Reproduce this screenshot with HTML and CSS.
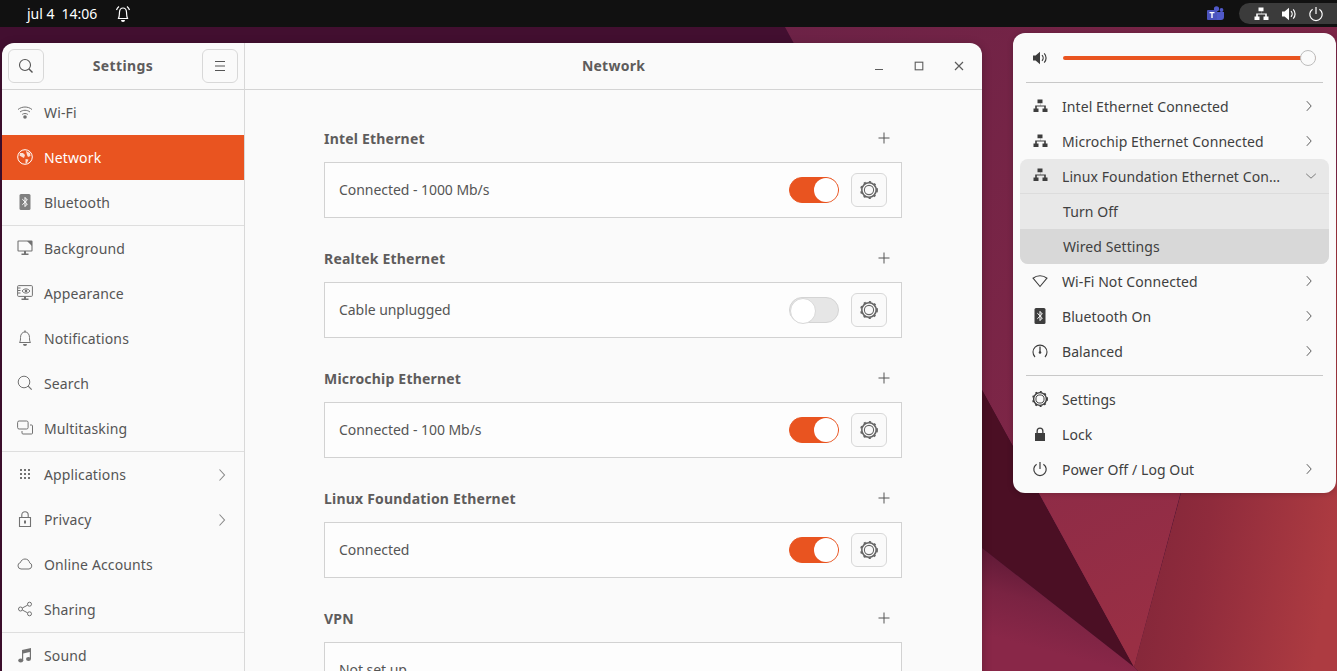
FILE: index.html
```html
<!DOCTYPE html>
<html lang="es">
<head>
<meta charset="utf-8">
<title>Settings - Network</title>
<link rel="stylesheet" href="styles.css">
</head>
<body>
<svg class="defs" width="0" height="0" aria-hidden="true">
  <symbol id="i-net" viewBox="0 0 16 16"><path fill="currentColor" d="M5.500 1.500h5v3.700H8.600v2.300h5.200v3h1.700V14h-5v-3.500h1.700V8.600H4.800v1.900h1.700V14h-5v-3.500h1.700v-3h5.200V5.200H5.500z"/></symbol>
  <symbol id="i-gear" viewBox="0 0 18 18"><circle cx="9" cy="9" r="7.200" fill="none" stroke="currentColor" stroke-width="1.600" /><circle cx="9" cy="9" r="8.100" fill="none" stroke="currentColor" stroke-width="1.700" stroke-dasharray="2.200 3.200"/><circle cx="9" cy="9" r="4.600" fill="none" stroke="currentColor" stroke-width="1.100"/></symbol>
  <symbol id="i-chev" viewBox="0 0 16 16"><path fill="none" stroke="currentColor" stroke-width="1.100" d="M5.500 2.500 10.500 8l-5 5.500"/></symbol>
  <symbol id="i-plus" viewBox="0 0 12 12"><path fill="none" stroke="currentColor" stroke-width="1" d="M6 .5v11M.5 6h11"/></symbol>
  <symbol id="i-vol" viewBox="0 0 16 16"><path fill="currentColor" d="M1 5.500h2.600L8 1.800v12.400L3.600 10.500H1z"/><path fill="none" stroke="currentColor" stroke-width="1.200" d="M10 5.200a4 4 0 0 1 0 5.600M12.200 3.400a6.600 6.600 0 0 1 0 9.200"/></symbol>
  <symbol id="i-power" viewBox="0 0 16 16"><path fill="none" stroke="currentColor" stroke-width="1.200" d="M8 1v7M4.600 3.200a6.200 6.200 0 1 0 6.800 0"/></symbol>
  <symbol id="i-bt" viewBox="0 0 12 16"><rect x=".5" y="0" width="11" height="16" rx="1.500" fill="currentColor"/><path fill="none" stroke="#fff" stroke-width="1" d="M3.300 5.200 8.300 10 6 12.600V3.400L8.300 6l-5 4.800"/></symbol>
</svg>

<main class="desktop">
  <svg class="wallpaper" viewBox="0 0 1337 671" preserveAspectRatio="none" aria-hidden="true">
    <defs>
      <linearGradient id="g-right" x1="0" y1="0.3" x2="1" y2="0.7"><stop offset="0" stop-color="#7c2438"/><stop offset="0.45" stop-color="#8f2b3c"/><stop offset="1" stop-color="#ad3b41"/></linearGradient>
      <linearGradient id="g-kite" x1="0" y1="0" x2="0.4" y2="1"><stop offset="0" stop-color="#8a2a48"/><stop offset="1" stop-color="#992f44"/></linearGradient>
      <linearGradient id="g-low" x1="0.7" y1="0.1" x2="0.45" y2="0.85"><stop offset="0" stop-color="#561632"/><stop offset="0.55" stop-color="#7a2342"/><stop offset="1" stop-color="#892748"/></linearGradient>
      <linearGradient id="g-top" x1="0" y1="0" x2="1" y2="1"><stop offset="0" stop-color="#6c2246"/><stop offset="1" stop-color="#8c2947"/></linearGradient>
    </defs>
    <rect width="1337" height="671" fill="#420f30"/>
    <polygon points="785,27 1337,27 1337,300 1180,494 1134,667 982,390" fill="url(#g-top)"/>
    <polygon points="982,390 1134,667 982,548" fill="#4b0f24"/>
    <polygon points="982,548 1134,667 1138,671 982,671" fill="url(#g-low)"/>
    <polygon points="1013,445 1134,667 1200,420 1013,420" fill="url(#g-kite)"/>
    <polygon points="1260,200 1337,200 1337,671 1138,671 1134,667" fill="url(#g-right)"/>
  </svg>

  <header class="topbar">
    <div class="clock"><span>jul 4</span><span>14:06</span>
      <svg class="bell-top" width="16" height="18" viewBox="0 0 16 18"><path fill="none" stroke="#fff" stroke-width="1.200" d="M3.500 13.500c1-2 .8-4 1-6.500C4.700 4.500 6 3 8 3s3.300 1.500 3.500 4c.2 2.500 0 4.500 1 6.500zM1.500 5C2 3.500 3 2.300 4 1.500M14.500 5C14 3.500 13 2.300 12 1.500"/><path fill="#fff" d="M6 15h4a2 2 0 0 1-4 0z"/></svg>
    </div>
    <div class="tray">
      <svg class="teams" width="18" height="16" viewBox="0 0 18 16"><circle cx="9.500" cy="2.800" r="2.600" fill="#5059c9"/><circle cx="14.500" cy="4" r="1.900" fill="#5059c9"/><path fill="#5059c9" d="M5 6h12v5a3 3 0 0 1-3 3H9a4 4 0 0 1-4-4z"/><rect x="0" y="4" width="10" height="10" rx="1" fill="#4b53bc"/><path fill="#fff" d="M2.500 6h5v1.200H5.700V12H4.300V7.200H2.500z"/></svg>
      <div class="pill">
        <svg class="pill-net" width="18" height="16"><use href="#i-net"/></svg>
        <svg width="16" height="16"><use href="#i-vol"/></svg>
        <svg width="16" height="16"><use href="#i-power"/></svg>
      </div>
    </div>
  </header>

  <section class="window">
    <aside class="sidebar">
      <div class="side-head">
        <button class="head-btn"><svg width="16" height="16" viewBox="0 0 16 16"><circle cx="7" cy="7" r="5.500" fill="none" stroke="currentColor" stroke-width="1.100"/><path stroke="currentColor" stroke-width="1.400" d="m11 11 3.500 3.500"/></svg></button>
        <h1 class="side-title">Settings</h1>
        <button class="head-btn"><svg width="12" height="12" viewBox="0 0 12 12"><path stroke="currentColor" stroke-width="1" d="M1 1.500h10M1 6h10M1 10.500h10"/></svg></button>
      </div>
      <nav class="side-list">
        <div class="side-row"><svg class="side-ic" width="16" height="16" viewBox="0 0 16 16"><path fill="none" stroke="currentColor" stroke-width="1" d="M1 5.500c4-3.300 10-3.300 14 0M3 8c3-2.300 7-2.300 10 0M5.200 10.400c1.700-1.200 3.900-1.200 5.600 0"/><circle cx="8" cy="13" r="1.800" fill="currentColor"/></svg>Wi-Fi</div>
        <div class="side-row active"><svg class="side-ic" width="16" height="16" viewBox="0 0 16 16"><circle cx="8" cy="8" r="7.300" fill="none" stroke="currentColor" stroke-width="1"/><path fill="currentColor" opacity=".8" d="M3 4h3l2 2-1 3-2-1-2.500-1.500zM9 2l4 2 .5 3-2.500 1-1-2zM8.500 10l3 .5-1.500 3.500-1.500.5z"/></svg>Network</div>
        <div class="side-row"><svg class="side-ic side-ic-narrow" width="12" height="16" viewBox="0 0 12 16"><use href="#i-bt"/></svg>Bluetooth</div>
        <hr class="side-sep">
        <div class="side-row"><svg class="side-ic" width="16" height="16" viewBox="0 0 16 16"><path fill="none" stroke="currentColor" stroke-width="1.100" d="M1.500 1h13a.5.5 0 0 1 .5.5v9a.5.5 0 0 1-.5.5h-13a.5.5 0 0 1-.5-.5v-9a.5.5 0 0 1 .5-.5z"/><path fill="currentColor" d="M10 1h5v5zM7 11h2v2.500h2.500V15h-7v-1.500H7z"/></svg>Background</div>
        <div class="side-row"><svg class="side-ic" width="16" height="16" viewBox="0 0 16 16"><rect x=".6" y=".6" width="14.800" height="10.800" rx="1" fill="none" stroke="currentColor" stroke-width="1"/><path fill="none" stroke="currentColor" stroke-width="1" d="M5 6c2-2.800 6-2.800 8 0-2 2.800-6 2.800-8 0zM1 3h2.500M1 5.500h2.500M1 8h2.500"/><circle cx="9" cy="6" r="1.300" fill="currentColor"/><path fill="currentColor" d="M7 11.500h2v2h2.500V15h-7v-1.500H7z"/></svg>Appearance</div>
        <div class="side-row"><svg class="side-ic" width="16" height="16" viewBox="0 0 16 16"><path fill="none" stroke="currentColor" stroke-width="1" d="M2.500 12.500c1-1.500 1-3 1-5C3.500 4 5.500 2 8 2s4.500 2 4.500 5.500c0 2 0 3.500 1 5z"/><path fill="currentColor" d="M6 14h4a2 2 0 0 1-4 0zM7.300.6h1.400V2H7.300z"/></svg>Notifications</div>
        <div class="side-row"><svg class="side-ic" width="16" height="16" viewBox="0 0 16 16"><circle cx="7" cy="7" r="5.800" fill="none" stroke="currentColor" stroke-width="1"/><path stroke="currentColor" stroke-width="1.200" d="m11.200 11.200 3.500 3.500"/></svg>Search</div>
        <div class="side-row"><svg class="side-ic" width="16" height="16" viewBox="0 0 16 16"><rect x=".6" y="1" width="10.500" height="8" rx="1.500" fill="none" stroke="currentColor" stroke-width="1"/><path fill="none" stroke="currentColor" stroke-width="1" d="M13 5h1.500a1 1 0 0 1 1 1v7a1 1 0 0 1-1 1H6a1 1 0 0 1-1-1v-2"/></svg>Multitasking</div>
        <hr class="side-sep">
        <div class="side-row"><svg class="side-ic" width="16" height="16" viewBox="0 0 16 16"><path fill="currentColor" d="M3 3h2v2H3zM7 3h2v2H7zM11 3h2v2h-2zM3 7h2v2H3zM7 7h2v2H7zM11 7h2v2h-2zM3 11h2v2H3zM7 11h2v2H7zM11 11h2v2h-2z"/></svg>Applications<svg class="side-chev" width="16" height="16"><use href="#i-chev"/></svg></div>
        <div class="side-row"><svg class="side-ic" width="16" height="16" viewBox="0 0 16 16"><path fill="none" stroke="currentColor" stroke-width="1.100" d="M2.500 6.500h11v9h-11zM4.800 6.500V4a3.200 3.200 0 0 1 6.400 0v2.500"/><rect x="7" y="9.500" width="2" height="3" fill="currentColor"/></svg>Privacy<svg class="side-chev" width="16" height="16"><use href="#i-chev"/></svg></div>
        <div class="side-row"><svg class="side-ic" width="16" height="16" viewBox="0 0 16 16"><path fill="none" stroke="currentColor" stroke-width="1" d="M4 13a3.300 3.300 0 0 1-.5-6.500C4 4.300 6 3 8 3c2.400 0 4.200 1.500 4.600 3.800A3.200 3.200 0 0 1 12 13z"/></svg>Online Accounts</div>
        <div class="side-row"><svg class="side-ic" width="16" height="16" viewBox="0 0 16 16"><g fill="none" stroke="currentColor" stroke-width="1"><circle cx="3.500" cy="8" r="2"/><circle cx="12.500" cy="3.200" r="2"/><circle cx="12.500" cy="12.800" r="2"/><path d="m5.300 7 5.400-2.900M5.300 9l5.400 2.900"/></g></svg>Sharing</div>
        <hr class="side-sep">
        <div class="side-row"><svg class="side-ic" width="16" height="16" viewBox="0 0 16 16"><path fill="currentColor" d="M5 3 14 1v11h-1.200V5L6.200 6.400V14H5z"/><ellipse cx="3.700" cy="13.500" rx="2.500" ry="2" fill="currentColor"/><ellipse cx="11.500" cy="12" rx="2.500" ry="2" fill="currentColor"/></svg>Sound</div>
      </nav>
    </aside>

    <div class="content">
      <div class="content-head">
        <h2 class="content-title">Network</h2>
        <div class="win-ctrl">
          <svg width="10" height="10" viewBox="0 0 10 10"><path stroke="currentColor" stroke-width="1" d="M1 8.500h8"/></svg>
          <svg width="10" height="10" viewBox="0 0 10 10"><rect x="1.200" y="1.200" width="7.600" height="7.600" fill="none" stroke="currentColor" stroke-width="1.100"/></svg>
          <svg width="10" height="10" viewBox="0 0 10 10"><path stroke="currentColor" stroke-width="1.200" d="m1 1 8 8M9 1 1 9"/></svg>
        </div>
      </div>
      <div class="scroll">
        <section class="net">
          <div class="net-head"><h3>Intel Ethernet</h3><svg width="12" height="12"><use href="#i-plus"/></svg></div>
          <div class="net-box"><span>Connected - 1000 Mb/s</span><div class="toggle on"></div><button class="gear-btn"><svg width="18" height="18"><use href="#i-gear"/></svg></button></div>
        </section>
        <section class="net">
          <div class="net-head"><h3>Realtek Ethernet</h3><svg width="12" height="12"><use href="#i-plus"/></svg></div>
          <div class="net-box"><span>Cable unplugged</span><div class="toggle"></div><button class="gear-btn"><svg width="18" height="18"><use href="#i-gear"/></svg></button></div>
        </section>
        <section class="net">
          <div class="net-head"><h3>Microchip Ethernet</h3><svg width="12" height="12"><use href="#i-plus"/></svg></div>
          <div class="net-box"><span>Connected - 100 Mb/s</span><div class="toggle on"></div><button class="gear-btn"><svg width="18" height="18"><use href="#i-gear"/></svg></button></div>
        </section>
        <section class="net">
          <div class="net-head"><h3>Linux Foundation Ethernet</h3><svg width="12" height="12"><use href="#i-plus"/></svg></div>
          <div class="net-box"><span>Connected</span><div class="toggle on"></div><button class="gear-btn"><svg width="18" height="18"><use href="#i-gear"/></svg></button></div>
        </section>
        <section class="net">
          <div class="net-head"><h3>VPN</h3><svg width="12" height="12"><use href="#i-plus"/></svg></div>
          <div class="net-box"><span>Not set up</span></div>
        </section>
      </div>
    </div>
  </section>

  <section class="popover">
    <div class="slider-row">
      <svg width="16" height="16"><use href="#i-vol"/></svg>
      <div class="slider"><div class="knob"></div></div>
    </div>
    <hr class="pop-sep">
    <div class="pop-row"><svg class="pop-ic" width="16" height="16"><use href="#i-net"/></svg><span class="pop-text">Intel Ethernet Connected</span><svg class="pop-chev" width="14" height="14"><use href="#i-chev"/></svg></div>
    <div class="pop-row"><svg class="pop-ic" width="16" height="16"><use href="#i-net"/></svg><span class="pop-text">Microchip Ethernet Connected</span><svg class="pop-chev" width="14" height="14"><use href="#i-chev"/></svg></div>
    <div class="pop-group">
      <div class="group-row group-open"><svg class="pop-ic" width="16" height="16"><use href="#i-net"/></svg><span class="pop-text">Linux Foundation Ethernet Con…</span><svg class="pop-down" width="14" height="14"><use href="#i-chev"/></svg></div>
      <div class="group-row group-sub">Turn Off</div>
      <div class="group-row group-sub group-hover">Wired Settings</div>
    </div>
    <div class="pop-row"><svg class="pop-ic" width="16" height="16" viewBox="0 0 16 16"><path fill="none" stroke="currentColor" stroke-width="1.100" d="M1 5.200C5 2 11 2 15 5.200L8 13.500z"/></svg><span class="pop-text">Wi-Fi Not Connected</span><svg class="pop-chev" width="14" height="14"><use href="#i-chev"/></svg></div>
    <div class="pop-row"><svg class="pop-ic" width="16" height="16" viewBox="0 0 12 16"><use href="#i-bt"/></svg><span class="pop-text">Bluetooth On</span><svg class="pop-chev" width="14" height="14"><use href="#i-chev"/></svg></div>
    <div class="pop-row"><svg class="pop-ic" width="16" height="16" viewBox="0 0 16 16"><path fill="none" stroke="currentColor" stroke-width="1.100" d="M3 14A7 7 0 1 1 13 14"/><path stroke="currentColor" stroke-width="1.300" d="M8 3.500V9"/><circle cx="8" cy="9.500" r="1.300" fill="currentColor"/></svg><span class="pop-text">Balanced</span><svg class="pop-chev" width="14" height="14"><use href="#i-chev"/></svg></div>
    <hr class="pop-sep pop-sep-mid">
    <div class="pop-row"><svg class="pop-ic" width="16" height="16" viewBox="0 0 18 18"><use href="#i-gear"/></svg><span class="pop-text">Settings</span></div>
    <div class="pop-row"><svg class="pop-ic" width="16" height="16" viewBox="0 0 16 16"><path fill="currentColor" d="M3 7h1.500V5a3.500 3.500 0 0 1 7 0v2H13v8H3zM5.800 7h4.400V5a2.200 2.200 0 0 0-4.400 0z"/></svg><span class="pop-text">Lock</span></div>
    <div class="pop-row"><svg class="pop-ic" width="16" height="16"><use href="#i-power"/></svg><span class="pop-text">Power Off / Log Out</span><svg class="pop-chev" width="14" height="14"><use href="#i-chev"/></svg></div>
  </section>
</main>
</body>
</html>
```
FILE: styles.css
```css
* { box-sizing: border-box; }
html, body { margin: 0; height: 100%; overflow: hidden; }
body { font-family: "Noto Sans", "Open Sans", sans-serif; font-size: 14px; color: #4c4c4c; }
.defs { position: absolute; }
.desktop { position: relative; width: 1337px; height: 671px; overflow: hidden; background: #420f30; }
.wallpaper { position: absolute; inset: 0; width: 100%; height: 100%; }

.topbar { position: relative; height: 27px; background: #111; color: #fff; display: flex; align-items: center; justify-content: space-between; }
.clock { display: flex; align-items: center; margin-left: 27px; font-size: 14px; }
.clock span + span { margin-left: 7px; }
.bell-top { margin-left: 18px; }
.tray { display: flex; align-items: center; }
.teams { margin-right: 14px; }
.pill { width: 98px; height: 21px; background: #3b3b3b; border-radius: 11px 0 0 11px; display: flex; align-items: center; padding-left: 13px; gap: 11px; color: #fff; }

.window { position: absolute; left: 2px; top: 43px; width: 980px; height: 640px; background: #fafafa; border-radius: 12px 12px 0 0; display: flex; overflow: hidden; box-shadow: 0 2px 10px rgba(0,0,0,.25); }
.sidebar { width: 243px; flex: none; border-right: 1px solid #d8d8d8; }
.side-head { height: 47px; border-bottom: 1px solid #d4d4d4; display: flex; align-items: center; justify-content: space-between; padding: 0 6px; }
.head-btn { width: 36px; height: 34px; border: 1px solid #d8d8d8; border-radius: 6px; background: #fafafa; color: #555; display: flex; align-items: center; justify-content: center; padding: 0; }
.side-title { margin: 0 0 2px; font-size: 14px; font-weight: 700; color: #5e5c5c; letter-spacing: .4px; }
.side-row { position: relative; height: 45px; display: flex; align-items: center; padding-left: 42px; color: #555; font-size: 14px; letter-spacing: .13px; }
.side-ic { position: absolute; left: 15px; top: 14px; color: #727272; }
.side-ic-narrow { left: 17px; color: #808080; }
.active { background: #e95420; color: #fff; }
.active .side-ic { color: #fff; }
.side-chev { margin-left: auto; margin-right: 14px; color: #888; }
.side-sep { margin: 0; border: 0; height: 1px; background: #dedede; }

.content { flex: 1; min-width: 0; }
.content-head { position: relative; height: 47px; border-bottom: 1px solid #d4d4d4; display: flex; align-items: center; justify-content: center; }
.content-title { margin: 0 0 2px; font-size: 14px; font-weight: 700; color: #5e5c5c; letter-spacing: .25px; }
.win-ctrl { position: absolute; right: 18px; top: 18px; display: flex; gap: 30px; color: #5c5c5c; }
.scroll { width: 578px; margin: 0 0 0 79px; padding-top: 36px; }
.net { margin-bottom: 28px; }
.net-head { height: 24px; margin-bottom: 12px; display: flex; align-items: center; justify-content: space-between; padding-right: 12px; color: #555; }
.net-head h3 { margin: 0; font-size: 14px; font-weight: 700; color: #5e5c5c; letter-spacing: .2px; }
.net-box { height: 56px; background: #fdfdfd; border: 1px solid #d2d2d2; display: flex; align-items: center; padding: 0 14px; color: #555; font-size: 14px; letter-spacing: -.05px; }
.net-box span { flex: 1; padding-bottom: 2px; }
.toggle { position: relative; width: 50px; height: 26px; border-radius: 13px; background: #e6e6e6; border: 1px solid #d4d4d4; margin-right: 12px; }
.toggle::after { content: ""; position: absolute; left: 0; top: 0; width: 24px; height: 24px; border-radius: 50%; background: #fff; border: 1px solid #d8d8d8; }
.toggle.on { background: #e95420; border-color: #e95420; }
.toggle.on::after { left: 24px; border: 0; }
.gear-btn { width: 36px; height: 34px; border: 1px solid #d8d8d8; border-radius: 6px; background: #fafafa; color: #666; display: flex; align-items: center; justify-content: center; padding: 0; }

.popover { position: absolute; left: 1013px; top: 33px; width: 323px; height: 460px; background: #fafafa; border-radius: 12px; color: #3d3d3d; box-shadow: 0 1px 6px rgba(0,0,0,.2); }
.slider-row { height: 49px; display: flex; align-items: center; padding-left: 19px; }
.slider { position: relative; width: 253px; height: 4px; margin-left: 15px; background: #e95420; border-radius: 2px; }
.knob { position: absolute; right: 0; top: -6px; width: 16px; height: 16px; border-radius: 50%; background: #fafafa; border: 1px solid #bdbdbd; }
.pop-sep { margin: 0 13px 6px; border: 0; height: 1px; background: #c8c8c8; }
.pop-sep-mid { margin-top: 6px; }
.pop-row { height: 35px; display: flex; align-items: center; padding-left: 19px; font-size: 14px; color: #404040; letter-spacing: .08px; }
.pop-ic { flex: none; color: #3d3d3d; margin-bottom: 2px; }
.pop-text { margin-left: 14px; white-space: nowrap; }
.pop-chev { margin-left: auto; margin-right: 20px; color: #555; margin-bottom: 1px; }
.pop-group { margin: 0 7px; background: #e8e8e8; border-radius: 8px; overflow: hidden; }
.group-row { height: 35px; display: flex; align-items: center; font-size: 14px; color: #404040; letter-spacing: .08px; }
.group-open { padding-left: 12px; border-bottom: 1px solid #dcdcdc; }
.pop-down { margin-left: auto; margin-right: 11px; color: #777; transform: rotate(90deg); }
.group-sub { padding-left: 43px; }
.group-hover { background: #d8d8d8; }
```
